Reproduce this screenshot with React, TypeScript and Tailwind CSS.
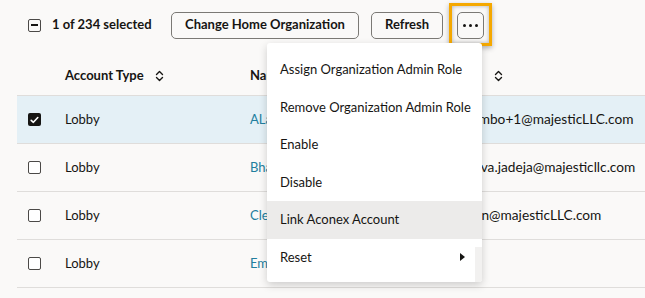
import React from "react";

const SortIcon = () => (
  <svg width="9" height="12" viewBox="0 0 9 12" fill="none" stroke="#161513" strokeWidth="1.4" strokeLinecap="round" strokeLinejoin="round">
    <path d="M1.5 4.5 L4.5 1.5 L7.5 4.5" />
    <path d="M1.5 7.5 L4.5 10.5 L7.5 7.5" />
  </svg>
);

const Box = ({ checked }: { checked?: boolean }) =>
  checked ? (
    <span className="flex items-center justify-center w-[13px] h-[13px] rounded-[2px] bg-[#161513]">
      <svg width="9" height="8" viewBox="0 0 9 8" fill="none" stroke="#ffffff" strokeWidth="1.6" strokeLinecap="round" strokeLinejoin="round">
        <path d="M1.2 4.3 L3.4 6.3 L7.8 1.5" />
      </svg>
    </span>
  ) : (
    <span className="block w-[13px] h-[13px] rounded-[2px] border-[1.5px] border-[#4b4947] bg-white" />
  );

const rows = [
  { name: "ALan Lombo", email: "alan.lombo+1@majesticLLC.com", selected: true },
  { name: "Bhargava Jadeja", email: "bhargava.jadeja@majesticllc.com" },
  { name: "Clean Admin", email: "clean.an@majesticLLC.com" },
  { name: "Emma Jones", email: "" },
];

const menuItems = [
  "Assign Organization Admin Role",
  "Remove Organization Admin Role",
  "Enable",
  "Disable",
  "Link Aconex Account",
  "Reset",
];

export default function App() {
  return (
    <div
      className="relative w-[645px] h-[298px] overflow-hidden bg-[#faf9f8] text-[#161513] text-[13px]"
      style={{ fontFamily: "Lato, 'Noto Sans', sans-serif" }}
    >
      {/* toolbar */}
      <div className="flex items-center h-[50px] pl-[28px]">
        <span className="flex items-center justify-center w-[13px] h-[13px] rounded-[2px] border-[1.5px] border-[#4b4947]">
          <span className="block w-[7px] h-[1.5px] bg-[#161513]" />
        </span>
        <span className="ml-[11px] w-[99px] whitespace-nowrap font-bold">1 of 234 selected</span>
        <button className="ml-[20px] h-[27px] w-[188px] rounded-[5px] border border-[#7b7975] font-bold whitespace-nowrap">
          Change Home Organization
        </button>
        <button className="ml-[12px] h-[27px] w-[72px] rounded-[5px] border border-[#7b7975] font-bold">
          Refresh
        </button>
        <div className="relative ml-[14px]">
          <span className="absolute left-[-8px] right-[-8px] top-[-9px] bottom-[-7px] border-[3px] border-[#f5a800] shadow-[inset_0_0_4px_rgba(0,0,0,0.3),0_2px_5px_rgba(0,0,0,0.3)]" />
          <button className="relative flex items-center justify-center gap-[3px] h-[27px] w-[27px] rounded-[5px] border border-[#7b7975] bg-[#faf9f8]">
            <span className="block w-[3px] h-[3px] rounded-full bg-[#161513]" />
            <span className="block w-[3px] h-[3px] rounded-full bg-[#161513]" />
            <span className="block w-[3px] h-[3px] rounded-full bg-[#161513]" />
          </button>
        </div>
      </div>

      {/* header */}
      <div className="flex items-center h-[46px] pt-[6px] ml-[17px] border-b border-[#dfdddb] font-bold">
        <div className="w-[48px]" />
        <div className="w-[185px] flex items-center gap-[11px]">
          <span>Account Type</span>
          <SortIcon />
        </div>
        <div className="w-[190px] flex items-center gap-[11px]">
          <span>Name</span>
          <SortIcon />
        </div>
        <div className="flex items-center">
          <span className="w-[54px]">Email</span>
          <SortIcon />
        </div>
      </div>

      {/* rows */}
      {rows.map((r, i) => (
        <div
          key={i}
          className={`flex items-center h-[48px] ml-[17px] border-b border-[#dfdddb] ${r.selected ? "bg-[#e4f0f6]" : ""}`}
        >
          <div className="w-[48px] pl-[11px] flex items-center">
            <Box checked={r.selected} />
          </div>
          <div className="w-[185px]">Lobby</div>
          <div className="w-[190px] text-[#227e9e] whitespace-nowrap">{r.name}</div>
          <div className="whitespace-nowrap text-[13.7px]">{r.email}</div>
        </div>
      ))}

      {/* menu */}
      <div className="absolute left-[267px] top-[43px] w-[215px] h-[239px] bg-white rounded-[3px] shadow-[0_3px_9px_rgba(0,0,0,0.18)] pt-[8px] overflow-hidden">
        {menuItems.map((m, i) => (
          <div
            key={m}
            className={`flex items-center justify-between h-[37.5px] pl-[13px] pr-[17px] whitespace-nowrap ${i === 4 ? "bg-[#ecebea]" : ""}`}
          >
            <span>{m}</span>
            {m === "Reset" && (
              <svg width="5" height="8" viewBox="0 0 5 8">
                <path d="M0 0 L5 4 L0 8 Z" fill="#161513" />
              </svg>
            )}
          </div>
        ))}
        <div className="absolute right-0 top-[204px] bottom-0 w-[7px] bg-[#f2f1f0]" />
      </div>
    </div>
  );
}
